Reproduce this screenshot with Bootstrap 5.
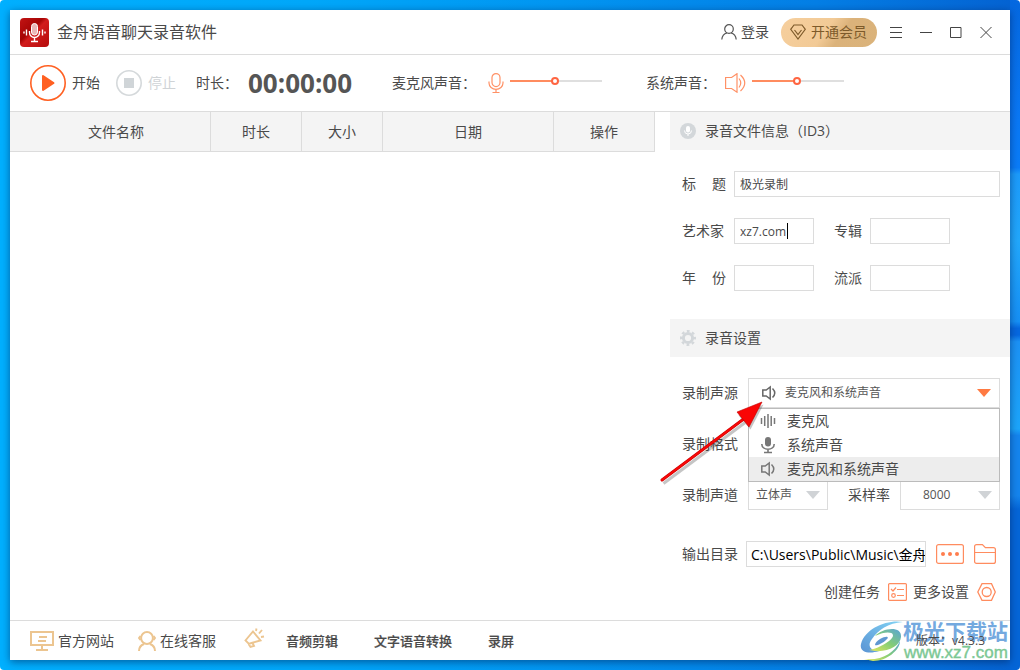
<!DOCTYPE html>
<html lang="zh-CN">
<head>
<meta charset="utf-8">
<meta name="viewport" content="width=device-width, initial-scale=1">
<title>金舟语音聊天录音软件</title>
<link rel="stylesheet" href="https://cdn.jsdelivr.net/npm/bootstrap@5.3.0/dist/css/bootstrap.min.css">
<style>
:root{--line:#dcdcdc;--ink:#4a4a4a;--orange:#ff8c5f;--strong:#ff6022;--gold:#ecc590}
html{background:#fff}
body{font-family:"Open Sans","Noto Sans CJK SC",sans-serif;font-size:14px;line-height:20px;color:var(--ink);
  min-height:100vh;padding:10px;border-radius:4px;
  background:
   linear-gradient(180deg,#0568e0 0%,#0a78f5 18%,#0a7cf8 25%,#1c9bfb 26%,#22a8fc 36%,#1690f5 48%,#0668e0 49%,#0668e0 50%,#1c92f5 51%,#1ca6fb 64%,#1585ee 65%,#1585ee 74%,#0566d8 76%,#0566d8 100%) right/10px 100% no-repeat,
   linear-gradient(90deg,#00b0ff 0%,#00a8fa 30%,#0296f2 55%,#047fe6 80%,#0562d2 100%)}
svg{display:block;fill:none;flex-shrink:0}
a{color:inherit;text-decoration:none}
.app-win{min-height:calc(100vh - 20px);background:#fff;box-shadow:0 2px 8px rgba(0,30,80,.55)}
.line-b{border-bottom:1px solid var(--line)}
.title-bar{min-height:45px;padding:0 9px 0 10px}
.app-name{font-size:16px;line-height:24px}
.plain-btn{background:none;border:0;padding:0;color:inherit;display:flex;align-items:center;justify-content:center}
.win-btn{width:30px;height:30px}
.vip-btn{height:29px;border:0;border-radius:15px;padding:0 10px 0 9px;gap:5px;color:#7d5a2a;
  background:linear-gradient(125deg,#f6cf9e 0%,#f2ca96 46%,#dbb27a 62%,#dab37b 100%)}
.tool-bar{min-height:57px;padding:0 20px}
.tool-btn{gap:6px;margin-right:16px;white-space:nowrap}
.tool-btn:disabled{color:#cfd3d6}
.clock{font-size:26px;font-weight:700;line-height:36px;color:#555;margin-left:10px;width:144px}
.vol-mic{margin:0 6px 0 12px}
.vol-spk{margin:0 6px 0 8px}
.sys-label{margin-left:44px}
.vol{appearance:none;width:92px;height:12px;background:none;margin:0 0 4px}
.vol::-webkit-slider-runnable-track{height:2px;background:linear-gradient(90deg,var(--orange) 49%,#dfdfdf 49%)}
.vol::-webkit-slider-thumb{appearance:none;width:8px;height:8px;margin-top:-3px;border:2px solid #ff6542;border-radius:50%;background:#fff}
.file-table{table-layout:fixed;width:100%;border-collapse:separate;border-spacing:0}
.file-table th{height:40px;padding:0;font-weight:400;text-align:center;background:#f4f4f4;border-right:1px solid var(--line);border-bottom:1px solid var(--line)}
.file-table th:first-child{padding-left:12px}
.side{width:340px;margin-left:15px}
.side-head{min-height:38px;padding:0 10px;gap:9px;background:#f4f4f4;font-size:14px;margin:0;font-weight:400;line-height:20px}
.side-body{padding:21px 10px 0 12px}
.id-form{gap:21px;padding-bottom:28px}
.id-label{width:44px;margin-right:8px}
.box{border:1px solid var(--line);border-radius:0;background:#fff;color:var(--ink);outline:0;height:26px;padding:0 5px;font-size:12px;min-width:0}
.box-s{width:80px}
.caret{position:absolute;left:53px;top:5px;width:1px;height:16px;background:#000}
.set-form{gap:21px}
.set-label{width:66px;flex-shrink:0}
.pick{height:30px;border:1px solid var(--line);border-radius:0;background:#fff;color:#555;font-size:12px}
.source-btn{width:100%;display:flex;align-items:center;padding:0 8px 0 12px}
.source-menu{position:absolute;z-index:2;top:30px;left:0;right:0;border:1px solid #bbb;background:#fff;margin:0;padding:0;list-style:none}
.source-menu button{width:100%;height:24px;justify-content:flex-start;padding-left:11px;gap:11px}
.source-menu .on{background:#ededed}
.sel{position:relative}
.sel-ch{width:80px}
.sel-rate{width:100px}
.sel select{appearance:none;width:100%;padding:0 7px;outline:0}
.sel-rate select{padding-left:22px}
.sel svg{position:absolute;right:8px;top:11px;pointer-events:none}
.rate-label{margin-right:10px}
.dir-row{padding-top:31px}
.path-box{font-size:14px;color:#000;width:180px;padding:0 0 0 4px}
.task-row{padding:15px 14px 0 0;gap:6px}
.arrow{position:absolute;z-index:3;left:-15px;top:36px;pointer-events:none}
.foot{min-height:40px;border-top:1px solid var(--line);padding:0 25px 0 20px;position:relative}
.foot-strong{font-size:13px;font-weight:500;-webkit-text-stroke:.2px currentColor}
.foot-links{gap:36px;margin-left:21px}
.ver{font-size:12px;z-index:1;position:relative}
.brand{position:absolute;right:0;top:0;height:39px;width:150px}
.brand-cn{position:absolute;left:43px;top:-4px;font-weight:700;font-size:21px;line-height:28px;color:#74a9df;white-space:nowrap}
.brand-url{position:absolute;left:44px;top:22px;font-family:"Liberation Sans",sans-serif;-webkit-text-stroke:.4px currentColor;font-size:17px;line-height:20px;color:#7cc894}
</style>
</head>
<body>
<svg width="0" height="0" class="position-absolute" aria-hidden="true">
  <symbol id="spk" viewBox="0 0 16 16"><path d="M1.800 5v6h3.400L9.200 14V2L5.200 5z" fill="none" stroke="currentColor" stroke-width="1.500"/><path d="M11.500 3.500q4.500 4.500 0 9" fill="none" stroke="currentColor" stroke-width="1.500"/></symbol>
  <symbol id="tri" viewBox="0 0 14 8"><path d="M0 0h14L7 8z" fill="currentColor"/></symbol>
</svg>
<div class="app-win d-flex flex-column">
  <header class="title-bar line-b d-flex align-items-center">
    <svg width="29" height="29" viewBox="0 0 29 29"><defs><linearGradient id="lg" x1="0" y1="0" x2="1" y2="1"><stop offset="0" stop-color="#c21414"/><stop offset=".4" stop-color="#a60505"/><stop offset=".5" stop-color="#d21c1c"/><stop offset="1" stop-color="#b50b0b"/></linearGradient></defs><rect width="29" height="29" rx="4" fill="url(#lg)"/><rect x="11.500" y="5.500" width="6" height="11.500" rx="3" fill="#e9b8b8" stroke="#fff"/><path d="M9.500 13v1.500a5 5 0 0 0 10 0V13M14.500 19.500v4M11 23.500h7M6.500 11.500v6M4 13.500v2M22.500 11.500v6M25 13.500v2" stroke="#fff" stroke-width="1.400"/></svg>
    <span class="app-name ms-2">金舟语音聊天录音软件</span>
    <button class="plain-btn ms-auto me-2 pe-1" type="button"><svg class="me-1" width="16" height="16" viewBox="0 0 16 16" stroke="#555" stroke-width="1.200"><circle cx="8" cy="5" r="4.300"/><path d="M.8 15.500C1.200 11.500 3.500 9.500 6 9M15.200 15.500C14.800 11.500 12.500 9.500 10 9"/></svg>登录</button>
    <button class="vip-btn d-flex align-items-center me-1" type="button"><svg width="16" height="16" viewBox="0 0 16 16" stroke="#7d5a2a" stroke-width="1.200"><path d="M4 1h8l3.300 4.300L8 15 .7 5.300zM4.500 6L8 10.500 11.500 6"/></svg>开通会员</button>
    <button class="plain-btn win-btn" type="button" aria-label="菜单"><svg width="12" height="12" stroke="#444"><path d="M0 1.500h12M0 6.500h12M0 11.500h12"/></svg></button>
    <button class="plain-btn win-btn" type="button" aria-label="最小化"><svg width="12" height="12" stroke="#444"><path d="M0 6.500h12"/></svg></button>
    <button class="plain-btn win-btn" type="button" aria-label="最大化"><svg width="12" height="12" stroke="#444"><path d="M.5 1.500h10.500v10H.5z"/></svg></button>
    <button class="plain-btn win-btn" type="button" aria-label="关闭"><svg width="12" height="12" stroke="#444"><path d="M.5 1l11 11M11.500 1l-11 11"/></svg></button>
  </header>
  <div class="tool-bar line-b d-flex align-items-center">
    <button class="plain-btn tool-btn" type="button"><svg width="36" height="36" viewBox="0 0 36 36"><circle cx="18" cy="18" r="17.200" stroke="#ff6022" stroke-width="1.600"/><path d="M13 11l10.500 7L13 25z" fill="#ff6022" stroke="#ff6022" stroke-width="2" stroke-linejoin="round"/></svg>开始</button>
    <button class="plain-btn tool-btn" type="button" disabled><svg width="26" height="26" viewBox="0 0 26 26"><circle cx="13" cy="13" r="12.200" stroke="#d5d9db" stroke-width="1.600"/><path d="M8 8h10v10H8z" fill="#d0d5d8"/></svg>停止</button>
    <span class="ms-1">时长：</span>
    <span class="clock">00:00:00</span>
    <label for="mic">麦克风声音：</label>
    <svg class="vol-mic" width="16" height="22" viewBox="0 0 16 22" stroke="#ff9166" stroke-width="1.200"><rect x="4" y="1.600" width="8" height="13" rx="4"/><path d="M1 9.500v1.500a7 6.300 0 0 0 14 0V9.500M8 17.500v3M4.500 20.500h7"/></svg>
    <input class="vol" id="mic" type="range" value="49">
    <label class="sys-label" for="sys">系统声音：</label>
    <svg class="vol-spk" width="22" height="20" viewBox="0 0 22 20" stroke="#ff9166" stroke-width="1.200"><path d="M1.600 4.500h6L13 .7v18.500L7.600 15.500h-6zM15 5.500q3.500 4.500 0 9M16.500 2q8.500 8 0 16"/></svg>
    <input class="vol" id="sys" type="range" value="49">
  </div>
  <main class="d-flex flex-grow-1">
    <section class="flex-grow-1">
      <table class="file-table">
        <colgroup><col style="width:31.16%"><col style="width:14.11%"><col style="width:12.56%"><col style="width:26.51%"><col></colgroup>
        <thead><tr><th>文件名称</th><th>时长</th><th>大小</th><th>日期</th><th>操作</th></tr></thead>
      </table>
    </section>
    <aside class="side flex-shrink-0">
      <h2 class="side-head d-flex align-items-center"><svg width="16" height="16" viewBox="0 0 16 16"><circle cx="8" cy="8" r="8" fill="#d3d7da"/><rect x="6" y="3" width="4" height="6.500" rx="2" fill="#fff"/><path d="M4.500 7.500a3.500 3.500 0 0 0 7 0M8 11v2" stroke="#fff"/></svg>录音文件信息（ID3）</h2>
      <form class="side-body id-form d-flex flex-column">
        <div class="d-flex align-items-center"><label class="id-label d-flex justify-content-between" for="t"><span>标</span><span>题</span></label><input class="box flex-grow-1" id="t" value="极光录制"></div>
        <div class="d-flex align-items-center"><label class="id-label" for="a">艺术家</label><div class="position-relative d-flex"><input class="box box-s" id="a" value="xz7.com"><span class="caret"></span></div><label class="ms-3 ps-1 me-2" for="al">专辑</label><input class="box box-s" id="al"></div>
        <div class="d-flex align-items-center"><label class="id-label d-flex justify-content-between" for="y"><span>年</span><span>份</span></label><input class="box box-s" id="y"><label class="ms-3 ps-1 me-2" for="g">流派</label><input class="box box-s" id="g"></div>
      </form>
      <h2 class="side-head d-flex align-items-center"><svg width="16" height="16" viewBox="0 0 16 16"><circle cx="8" cy="8" r="4.600" stroke="#d3d7da" stroke-width="3"/><circle cx="8" cy="8" r="6.900" stroke="#d3d7da" stroke-width="2.200" stroke-dasharray="2.800 2.620" stroke-dashoffset="1.400"/></svg>录音设置</h2>
      <form class="side-body set-form d-flex flex-column position-relative">
        <div class="d-flex align-items-center"><label class="set-label" for="src">录制声源</label>
          <div class="position-relative flex-grow-1">
            <button class="pick source-btn" id="src" type="button" aria-haspopup="listbox" aria-expanded="true"><svg width="16" height="16" color="#666"><use href="#spk"/></svg><span class="ms-2">麦克风和系统声音</span><svg class="ms-auto" width="14" height="8" color="#ff7a42"><use href="#tri"/></svg></button>
            <ul class="source-menu">
              <li><button class="plain-btn" type="button"><svg width="16" height="16" stroke="#777" stroke-width="1.500"><path d="M1.500 5v6M4.700 3v10M8 1v14M11.200 3v10M14.500 5v6"/></svg>麦克风</button></li>
              <li><button class="plain-btn" type="button"><svg width="16" height="18" viewBox="0 0 16 18"><rect x="5" y="1" width="6" height="9.500" rx="3" fill="#777"/><path d="M1.800 8c0 7 12.400 7 12.400 0M8 13v3.500M4 16.500h8" stroke="#777" stroke-width="1.600"/></svg>系统声音</button></li>
              <li><button class="plain-btn on" type="button"><svg width="16" height="16" color="#777"><use href="#spk"/></svg>麦克风和系统声音</button></li>
            </ul>
          </div></div>
        <div class="d-flex align-items-center"><label class="set-label" for="fmt">录制格式</label><div class="sel flex-grow-1"><select class="pick d-block" id="fmt"><option></option></select></div></div>
        <div class="d-flex align-items-center"><label class="set-label" for="ch">录制声道</label><div class="sel sel-ch"><select class="pick d-block" id="ch"><option>立体声</option></select><svg width="14" height="8" color="#d0d3d6"><use href="#tri"/></svg></div><label class="ms-auto rate-label" for="rate">采样率</label><div class="sel sel-rate"><select class="pick d-block" id="rate"><option>8000</option></select><svg width="14" height="8" color="#d0d3d6"><use href="#tri"/></svg></div></div>
        <svg class="arrow" width="120" height="96" viewBox="0 0 120 96"><g transform="translate(1.500 2.500)" opacity=".28"><path d="M7 88L90 26" stroke="#333" stroke-width="3"/><path d="M107 9L82 20l12 14z" fill="#333"/></g><path d="M7 87L90 25" stroke="#c00" stroke-width="3" stroke-linecap="round"/><path d="M7 87L90 25" stroke="#f80808" stroke-width="2" stroke-linecap="round"/><path d="M107 9L82 19l12 15z" fill="#fa0505" stroke="#c00000" stroke-width=".6"/></svg>
      </form>
      <div class="d-flex align-items-center side-body dir-row"><label class="flex-shrink-0 me-2" for="dir">输出目录</label><input class="box path-box flex-shrink-0" id="dir" value="C:\Users\Public\Music\金舟">
        <button class="plain-btn ms-auto" type="button" aria-label="浏览"><svg width="28" height="20"><rect x=".6" y=".6" width="26.800" height="18.800" rx="2" stroke="#ff8c5f" stroke-width="1.200"/><g fill="#ff7d4d"><circle cx="7" cy="10" r="2"/><circle cx="14" cy="10" r="2"/><circle cx="21" cy="10" r="2"/></g></svg></button>
        <button class="plain-btn ms-auto me-1" type="button" aria-label="打开文件夹"><svg width="22" height="20" stroke="#ff8c5f" stroke-width="1.200"><path d="M.6 17.400V2.600q0-2 2-2h5.800l3 3h8q2 0 2 2v11.800q0 2-2 2H2.600q-2 0-2-2zM.6 8.500h20.800"/></svg></button></div>
      <div class="task-row d-flex align-items-center justify-content-end"><button class="plain-btn" type="button">创建任务<svg class="ms-2" width="19" height="18" stroke="#ff8c5f" stroke-width="1.200"><rect x=".6" y=".6" width="17.800" height="16.800" rx="1"/><path d="M3 6l2 2 3-3.500M9 6.500h7M9 12.500h7"/><circle cx="5.500" cy="12.500" r="1.800"/></svg></button>
        <button class="plain-btn" type="button">更多设置<svg class="ms-2" width="19" height="18" viewBox="0 0 19 18" stroke="#ff8c5f" stroke-width="1.300"><path d="M5 .7h9.500L18.300 9l-3.800 8.300H5L.8 9z"/><circle cx="9.700" cy="9" r="4.500"/></svg></button></div>
    </aside>
  </main>
  <footer class="foot d-flex align-items-center">
    <a href="#" class="d-flex align-items-center"><svg class="me-1" width="24" height="20" stroke="#ecc590" stroke-width="2"><path d="M1 1h22v13H1zM12 14v5M6 19h12M9 6h8M8 10h8"/></svg>官方网站</a>
    <a href="#" class="d-flex align-items-center ms-4"><svg class="me-1" width="18" height="20" stroke="#ecc590" stroke-width="2"><circle cx="9" cy="7" r="5.900"/><path d="M1 20q0-5 5-7M17 20q0-5-5-7M2.500 5L1 7l1.500 2M15.500 5L17 7l-1.500 2"/></svg>在线客服</a>
    <a href="#" class="ms-4 ps-1 pb-1" aria-label="公告"><svg width="21" height="21" stroke="#ecc590" stroke-width="1.900"><path d="M9 3.500l7.500 9-9 2.500-2.500 1-3.500-3.500 2-2.500zM4.500 16l2 3 3.500-1-1.500-3M12 3l.5-2.500M15 5.500l3-3.500M17 9l3-.5"/></svg></a>
    <div class="foot-links d-flex"><a href="#" class="foot-strong">音频剪辑</a>
    <a href="#" class="foot-strong">文字语音转换</a>
    <a href="#" class="foot-strong">录屏</a></div>
    <span class="ver ms-auto">版本：v4.3.3</span>
    <div class="brand"><svg width="44" height="40" viewBox="0 0 44 40"><defs><linearGradient id="b1" x1="0" y1="1" x2="1" y2="0"><stop stop-color="#5a94d4"/><stop offset="1" stop-color="#83d4f5"/></linearGradient><linearGradient id="b2" x1="0" y1="1" x2="1" y2="0"><stop stop-color="#e6ea5a"/><stop offset=".5" stop-color="#83cc77"/><stop offset="1" stop-color="#58a4d8"/></linearGradient></defs><path d="M43 1C28-2 5 7 1 23c-2 9 9 10 18 7-9 0-12-6-7-12C18 9 28 2 43 1z" fill="url(#b1)"/><path d="M15 15c14-7 24-3 14 5-6 5-17 9-20 9 16 4 31-3 32-13C42 4 22 7 15 15z" fill="url(#b2)"/><path d="M20 18c7-4 10-2 6 1-4 4-10 6-11 5 0-2 2-4 5-6z" fill="#5f98d2"/><path d="M4 38c18 2 30-6 36-18 0 9-13 20-27 20z" fill="url(#b2)"/></svg><span class="brand-cn">极光下载站</span><span class="brand-url">www.xz7.com</span></div>
  </footer>
</div>
<script src="https://cdn.jsdelivr.net/npm/bootstrap@5.3.0/dist/js/bootstrap.bundle.min.js"></script>
</body>
</html>
